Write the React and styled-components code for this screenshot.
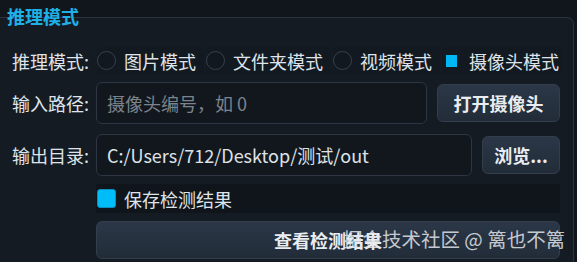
import * as React from 'react';
import styled, { createGlobalStyle } from 'styled-components';

const GlobalStyle = createGlobalStyle`
    html, body {
        margin: 0;
        padding: 0;
        background: #11161d;
        width: 577px;
        height: 262px;
        overflow: hidden;
    }
    * {
        box-sizing: border-box;
    }
`;

const Page = styled.div`
    position: relative;
    width: 577px;
    height: 262px;
    padding-top: 17px;
    font-family: "Noto Sans CJK SC", "Noto Sans", sans-serif;
    color: #dfe4ea;
    font-size: 18px;
    overflow: hidden;
`;

const GroupBox = styled.div`
    position: relative;
    width: 574px;
    height: 260px;
    background: #151b23;
    border: 1px solid #2b333e;
    border-left: none;
    border-radius: 0 7px 0 0;
    padding: 28px 13px 0 12px;
    display: flex;
    flex-direction: column;
    gap: 8px;
`;

const GroupTitle = styled.div`
    position: absolute;
    top: -14px;
    left: 7px;
    font-size: 18px;
    font-weight: 700;
    line-height: 24px;
    color: #1fb0e6;
`;

const Row = styled.div`
    display: flex;
    align-items: center;
    height: ${p => p.$h}px;
    margin-top: ${p => p.$mt || 0}px;
`;

const Label = styled.div`
    width: 84px;
    flex: none;
    white-space: nowrap;
    line-height: 1;
`;

const RadioGroup = styled.div`
    display: flex;
    align-items: center;
    gap: 2px;
    height: 100%;
    margin-left: 1px;
`;

const RadioItem = styled.div`
    display: flex;
    align-items: center;
    gap: 8px;
    height: 100%;
    padding-right: ${p => p.$pr}px;
    background: #131920;
    white-space: nowrap;
`;

const RadioCircle = styled.span`
    width: 19px;
    height: 19px;
    border-radius: 50%;
    border: 1px solid #36404c;
    background: #121820;
    flex: none;
`;

const RadioChecked = styled.span`
    width: 19px;
    height: 19px;
    display: flex;
    align-items: center;
    justify-content: center;
    flex: none;

    &::after {
        content: '';
        width: 11px;
        height: 12px;
        background: #00b7f5;
    }
`;

const Input = styled.div`
    flex: 1;
    height: 42px;
    display: flex;
    align-items: center;
    padding-left: 10px;
    background: #12171e;
    border: 1px solid #2d3642;
    border-radius: 6px;
    color: ${p => (p.$placeholder ? '#7c838c' : '#dfe3e8')};
    white-space: nowrap;
`;

const Button = styled.div`
    flex: ${p => (p.$w ? 'none' : 1)};
    width: ${p => (p.$w ? `${p.$w}px` : 'auto')};
    height: 38px;
    margin-left: ${p => p.$ml || 0}px;
    display: flex;
    align-items: center;
    justify-content: center;
    background: linear-gradient(180deg, #2b3747 0%, #222c39 100%);
    border: 1px solid #323e4c;
    border-radius: 6px;
    color: #e9edf1;
    font-weight: 700;
    white-space: nowrap;
`;

const CheckStrip = styled.div`
    margin-left: 84px;
    flex: 1;
    height: 100%;
    display: flex;
    align-items: center;
    gap: 8px;
    padding-left: 1px;
    background: #10151b;
`;

const CheckBox = styled.span`
    width: 19px;
    height: 19px;
    border-radius: 3px;
    background: #00bcf8;
    border: 1px solid #0a8fc0;
    flex: none;
`;

const Watermark = styled.div`
    position: absolute;
    left: 343px;
    top: 226px;
    font-size: 19.5px;
    line-height: 26px;
    color: rgba(226, 230, 235, 0.85);
    white-space: nowrap;
    pointer-events: none;
`;

const modes = [
    { label: '图片模式', pr: 8 },
    { label: '文件夹模式', pr: 8 },
    { label: '视频模式', pr: 8 },
    { label: '摄像头模式', pr: 3, checked: true },
];

export default function App() {
    return (
        <Page>
            <GlobalStyle />
            <GroupBox>
                <GroupTitle>推理模式</GroupTitle>
                <Row $h={27} $mt={1}>
                    <Label>推理模式:</Label>
                    <RadioGroup>
                        {modes.map(m => (
                            <RadioItem key={m.label} $pr={m.pr}>
                                {m.checked ? <RadioChecked /> : <RadioCircle />}
                                {m.label}
                            </RadioItem>
                        ))}
                    </RadioGroup>
                </Row>
                <Row $h={42}>
                    <Label>输入路径:</Label>
                    <Input $placeholder>摄像头编号，如 0</Input>
                    <Button $w={123} $ml={10}>打开摄像头</Button>
                </Row>
                <Row $h={42} $mt={2}>
                    <Label>输出目录:</Label>
                    <Input>C:/Users/712/Desktop/测试/out</Input>
                    <Button $w={78} $ml={10}>浏览...</Button>
                </Row>
                <Row $h={29}>
                    <CheckStrip>
                        <CheckBox />
                        保存检测结果
                    </CheckStrip>
                </Row>
                <Row $h={38}>
                    <Button $ml={84}>查看检测结果</Button>
                </Row>
            </GroupBox>
            <Watermark>掘金技术社区 @ 篱也不篱</Watermark>
        </Page>
    );
}
